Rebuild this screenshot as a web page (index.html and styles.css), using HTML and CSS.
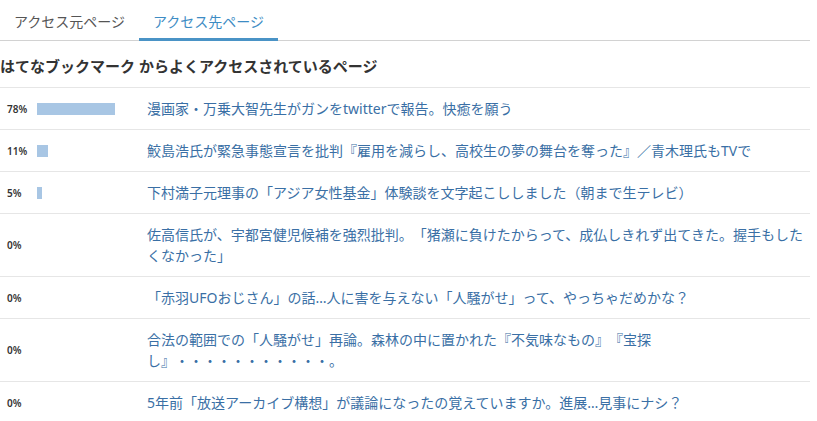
FILE: index.html
```html
<!DOCTYPE html>
<html lang="ja">
<head>
<meta charset="utf-8">
<title>アクセス先ページ</title>
<link rel="stylesheet" href="styles.css">
</head>
<body>
<div class="page">
  <nav class="tabs">
    <a class="tab">アクセス元ページ</a>
    <a class="tab active">アクセス先ページ</a>
  </nav>
  <h2 class="heading">はてなブックマーク からよくアクセスされているページ</h2>
  <ul class="list">
    <li class="row"><span class="pct">78%</span><span class="bar-cell"><span class="bar" style="width:78px"></span></span><a class="title">漫画家・万乗大智先生がガンをtwitterで報告。快癒を願う</a></li>
    <li class="row"><span class="pct">11%</span><span class="bar-cell"><span class="bar" style="width:11px"></span></span><a class="title">鮫島浩氏が緊急事態宣言を批判『雇用を減らし、高校生の夢の舞台を奪った』／青木理氏もTVで</a></li>
    <li class="row"><span class="pct">5%</span><span class="bar-cell"><span class="bar" style="width:5px"></span></span><a class="title">下村満子元理事の「アジア女性基金」体験談を文字起こししました（朝まで生テレビ）</a></li>
    <li class="row"><span class="pct">0%</span><span class="bar-cell"></span><a class="title">佐高信氏が、宇都宮健児候補を強烈批判。「猪瀬に負けたからって、成仏しきれず出てきた。握手もしたくなかった」</a></li>
    <li class="row"><span class="pct">0%</span><span class="bar-cell"></span><a class="title">「赤羽UFOおじさん」の話…人に害を与えない「人騒がせ」って、やっちゃだめかな？</a></li>
    <li class="row"><span class="pct">0%</span><span class="bar-cell"></span><a class="title">合法の範囲での「人騒がせ」再論。森林の中に置かれた『不気味なもの』『宝探し』・・・・・・・・・・・。</a></li>
    <li class="row"><span class="pct">0%</span><span class="bar-cell"></span><a class="title">5年前「放送アーカイブ構想」が議論になったの覚えていますか。進展…見事にナシ？</a></li>
  </ul>
</div>
</body>
</html>
```
FILE: styles.css
```css
html, body {
  margin: 0;
  padding: 0;
  background: #fff;
}
body {
  font-family: "Noto Sans", "Noto Sans CJK JP", sans-serif;
  color: #333;
  text-spacing-trim: space-all;
}
.page {
  width: 810px;
}
.tabs {
  display: flex;
  border-bottom: 1px solid #d2d2d2;
}
.tab {
  padding: 12px 14px 6px;
  line-height: 20px;
  font-size: 14px;
  color: #555;
  border-bottom: 3px solid transparent;
  margin-bottom: -1px;
}
.tab.active {
  color: #3d8cc4;
  border-bottom-color: #4a93c6;
}
.heading {
  margin: 0;
  padding: 15px 0 11px;
  font-size: 15px;
  line-height: 20px;
  font-weight: bold;
  color: #333;
  border-bottom: 1px solid #e6e6e6;
}
.list {
  list-style: none;
  margin: 0;
  padding: 0;
}
.row {
  display: flex;
  align-items: center;
  padding: 10px 0;
  border-bottom: 1px solid #e6e6e6;
}
.row:last-child {
  border-bottom: none;
}
.pct {
  width: 30px;
  padding-left: 7px;
  font-size: 10px;
  font-weight: 600;
  color: #333;
  flex: none;
}
.bar-cell {
  width: 100px;
  margin-right: 10px;
  flex: none;
  display: flex;
}
.bar {
  display: block;
  height: 12px;
  background: #a8c6e4;
}
.title {
  flex: 1;
  font-size: 14px;
  line-height: 21px;
  color: #3a6fa5;
}
```
